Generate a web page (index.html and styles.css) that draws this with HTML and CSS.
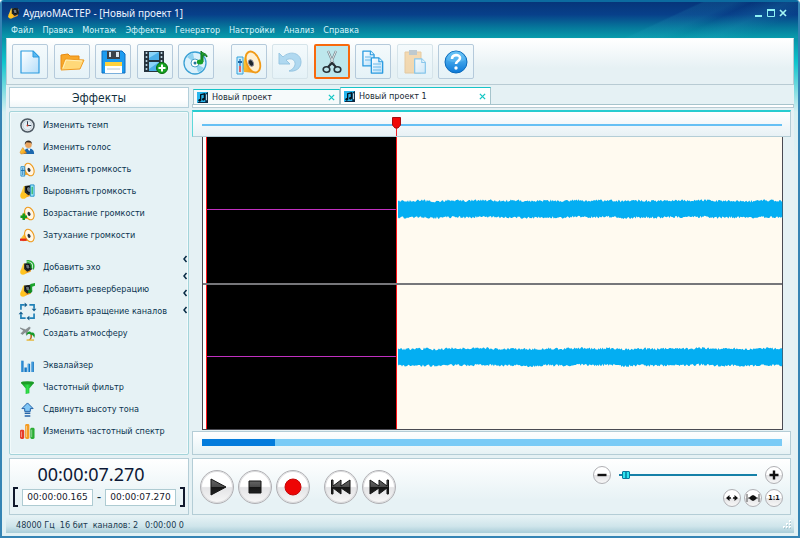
FILE: index.html
```html
<!DOCTYPE html>
<html lang="ru">
<head>
<meta charset="utf-8">
<title>АудиоМАСТЕР - [Новый проект 1]</title>
<link rel="stylesheet" href="styles.css">
</head>
<body>
<svg class="defs" aria-hidden="true">
  <defs>
    <linearGradient id="gold" x1="0" y1="0" x2="1" y2="1"><stop offset="0" stop-color="#ffe34a"/><stop offset="1" stop-color="#f08a10"/></linearGradient>
    <linearGradient id="sheet" x1="0" y1="0" x2="1" y2="1"><stop offset="0" stop-color="#ffffff"/><stop offset="1" stop-color="#b4defa"/></linearGradient>
    <linearGradient id="blue" x1="0" y1="0" x2="0" y2="1"><stop offset="0" stop-color="#6cc8f8"/><stop offset="1" stop-color="#0a78d8"/></linearGradient>
    <linearGradient id="green" x1="0" y1="0" x2="1" y2="0"><stop offset="0" stop-color="#0c8a18"/><stop offset=".5" stop-color="#2fe04a"/><stop offset="1" stop-color="#0a7a14"/></linearGradient>
    <linearGradient id="dark" x1="0" y1="0" x2="0" y2="1"><stop offset="0" stop-color="#666"/><stop offset=".5" stop-color="#4a4a4a"/><stop offset=".5" stop-color="#151515"/><stop offset="1" stop-color="#222"/></linearGradient>
  </defs>
  <symbol id="cone" viewBox="0 0 16 16">
    <path d="M1 11 7 3l5 10-9 1z" fill="url(#gold)"/>
    <ellipse cx="10" cy="8" rx="4.600" ry="7" transform="rotate(-24 10 8)" fill="#fff6e6" stroke="#ee9a1c" stroke-width="1.200"/>
    <ellipse cx="9.400" cy="8.600" rx="1.500" ry="2.300" transform="rotate(-24 9 8)" fill="#27303a"/>
  </symbol>
  <symbol id="horn" viewBox="0 0 16 16">
    <path d="M1 10 4 2l10 1-1 9-8 3-4-1z" fill="url(#gold)"/>
    <path d="m5 2 8-1 2 8-6 3-4-3z" fill="#20272b"/>
    <ellipse cx="9.500" cy="6" rx="2.400" ry="3.200" transform="rotate(-25 9 6)" fill="#6b757c" stroke="#000"/>
    <circle cx="3.600" cy="12.400" r="3.300" fill="#ffc420"/>
  </symbol>
  <symbol id="note" viewBox="0 0 12 12">
    <path d="M0 0h12v12H0z" fill="#27b6ee"/><path d="M9 2v9H1v1h11V0z" fill="#0a2a44"/><path d="M10 3v6h1V2z" fill="#e6f4fa"/>
    <path d="M4 9V3l4-1v6" fill="none" stroke="#04121e" stroke-width="1.400"/><circle cx="3" cy="9" r="1.500" fill="#04121e"/><circle cx="7" cy="8" r="1.500" fill="#04121e"/>
  </symbol>
  <symbol id="doc" viewBox="0 0 14 18">
    <path d="M1 1h8l4 4v12H1z" fill="url(#sheet)" stroke="#2a9be0" stroke-width="1.400" stroke-linejoin="round"/><path d="M9 1v4h4" fill="#e8f6ff" stroke="#2a9be0" stroke-width="1.200"/>
  </symbol>
</svg>

<div class="window">
  <header class="head">
    <div class="titlebar">
      <svg class="app-icon" viewBox="0 0 16 16"><use href="#horn"/></svg>
      <h1>АудиоМАСТЕР - [Новый проект 1]</h1>
      <div class="window-buttons">
        <button aria-label="Свернуть"><svg viewBox="0 0 10 10"><path d="M1 8h7" stroke="#8ff2f4" stroke-width="2"/></svg></button>
        <button aria-label="Развернуть"><svg viewBox="0 0 10 10"><path d="M1.500 2v6.500h7V2z" fill="none" stroke="#8ff2f4"/><path d="M1 2h8" stroke="#8ff2f4" stroke-width="2"/></svg></button>
        <button aria-label="Закрыть"><svg viewBox="0 0 10 10"><path d="m2 2 6 6m0-6L2 8" stroke="#a4f6f4" stroke-width="1.700"/></svg></button>
      </div>
    </div>
    <nav class="menu">
      <a href="#">Файл</a><a href="#">Правка</a><a href="#">Монтаж</a><a href="#">Эффекты</a><a href="#">Генератор</a><a href="#">Настройки</a><a href="#">Анализ</a><a href="#">Справка</a>
    </nav>
  </header>

  <main class="client">
    <div class="toolbar">
      <div class="tools tools-file">
        <button aria-label="Новый"><svg viewBox="0 0 26 26"><path d="M4 2h12l6 6v16H4z" fill="url(#sheet)" stroke="#2a9be0" stroke-width="1.200" stroke-linejoin="round"/><path d="M16 2v6h6z" fill="#5ab8f0" stroke="#2a9be0"/></svg></button>
        <button aria-label="Открыть"><svg viewBox="0 0 26 26"><path d="M2 20V6l7-1 2 2h9v5" fill="#f8a82a" stroke="#e88a10"/><path d="M2 21 6 10l19 1-4 9z" fill="#ffd878" stroke="#f09a20"/><path d="m4 19 3-8 16 1" fill="none" stroke="#fff0b8"/></svg></button>
        <button aria-label="Сохранить"><svg viewBox="0 0 26 26"><path d="M2 2h20l3 3v19H2z" fill="#1c9cf0" stroke="#0c6cc0"/><path d="M7 2h13v8H7z" fill="#3b4148"/><path d="M9 3h2v5H9zm7 0h3v5h-3z" fill="#dfe6ec"/><path d="M5 13h17v11H5z" fill="#fff"/><path d="M5 13h17v4H5z" fill="#ffd23c"/><path d="M7 20h13" stroke="#b8c8d4"/></svg></button>
        <button aria-label="Из видео"><svg viewBox="0 0 26 26"><path d="M2 2h20v21H2z" fill="#26343e"/><path d="M7 3h10v8H7zm0 10h10v9H7z" fill="#4cb0e8"/><path d="M7 3h10L7 9zm0 10h10L7 20z" fill="#8ad4f8"/><path d="M4.500 3v20M19.500 3v20" stroke="#b9d2de" stroke-width="1.600" stroke-dasharray="2 2"/><circle cx="20" cy="19" r="5.500" fill="#16a422" stroke="#086a10"/><path d="M20 15.500v7M16.500 19h7" stroke="#fff" stroke-width="2"/></svg></button>
        <button aria-label="Из CD"><svg viewBox="0 0 26 26"><circle cx="12" cy="14" r="11" fill="#dcf1fb" stroke="#3aa0d4" stroke-width="1.300"/><path d="m12 14-8-6a10 10 0 0 1 6-4zm0 0 9 5a10 10 0 0 1-6 4z" fill="#8ed2f0"/><circle cx="12" cy="14" r="4" fill="#fff" stroke="#4c9fc4"/><circle cx="12" cy="14" r="1.500" fill="#24759c"/><path d="M18 12V2c2 3 6 2 6 6-2-2-4-2-4-2v7" fill="#20a030" stroke="#087018"/><ellipse cx="17" cy="13" rx="3.200" ry="2.500" fill="#18a028"/></svg></button>
      </div>
      <div class="tools tools-edit">
        <button aria-label="Громкость"><svg viewBox="0 0 26 26"><path d="m6 16 4-12 10 20-12-1z" fill="url(#gold)"/><ellipse cx="17" cy="13" rx="6.500" ry="11" transform="rotate(-22 17 13)" fill="#fff0d2" stroke="#f09a18" stroke-width="1.800"/><ellipse cx="15" cy="14" rx="2.300" ry="3.400" transform="rotate(-22 15 14)" fill="#1d252c" stroke="#889"/><path d="M1 8h6v17H1z" fill="#c8ecfc" stroke="#35a3dd"/><path d="M4 10v7" stroke="#2e8ad0" stroke-width="1.500"/><path d="M4 17v6" stroke="#ee3a30" stroke-width="1.500"/><path d="M2 13h4" stroke="#1c66a4" stroke-width="2"/></svg></button>
        <button class="faded" aria-label="Отменить"><svg viewBox="0 0 26 26"><path d="M2 4v11h11l-4-4c5-3 10 0 9 5-1 3-3 5-6 6 7 1 12-3 12-9 0-9-11-12-18-5z" fill="#74bce8" stroke="#4698cc"/></svg></button>
        <button class="selected" aria-label="Вырезать"><svg viewBox="0 0 26 26"><path d="m9 2 6 14m2-14-6 14" stroke="#76868e" stroke-width="2.200"/><path d="m9 2 6 14m2-14-6 14" stroke="#e0e8ea" stroke-width="1"/><path d="m9 18 4-4 4 4" fill="none" stroke="#222c32" stroke-width="2"/><ellipse cx="7.500" cy="20.500" rx="3.300" ry="2.700" fill="none" stroke="#263238" stroke-width="1.600"/><ellipse cx="18.500" cy="20.500" rx="3.300" ry="2.700" fill="none" stroke="#263238" stroke-width="1.600"/></svg></button>
        <button aria-label="Копировать"><svg viewBox="0 0 26 26"><use href="#doc" x="2" y="1" width="13" height="17"/><path d="M5 8h6M5 11h6" stroke="#68b8e8"/><use href="#doc" x="10" y="8" width="14" height="17"/><path d="M13 15h8m-8 3h8m-8 3h8" stroke="#68b8e8"/></svg></button>
        <button class="faded" aria-label="Вставить"><svg viewBox="0 0 26 26"><path d="M3 3h16v21H3z" fill="#f8bd6c" stroke="#dfa04c"/><path d="M7 1h8v5H7z" fill="#8c9ba4"/><use href="#doc" x="11" y="9" width="14" height="16"/></svg></button>
        <button aria-label="Помощь"><svg viewBox="0 0 26 26"><circle cx="13" cy="13" r="11" fill="url(#blue)" stroke="#0869bb"/><path d="M4 11a9 9 0 0 1 18 0c-5 3-13 3-18 0" fill="#64bef4" opacity=".5"/><path d="M9 10c0-5 8-5 8-1 0 3-4 3-4 6" fill="none" stroke="#fff" stroke-width="2.600"/><circle cx="13" cy="19" r="1.700" fill="#fff"/></svg></button>
      </div>
    </div>

    <div class="workspace">
      <aside class="side">
        <h2>Эффекты</h2>
        <div class="effects">
          <ul>
            <li><a href="#"><svg viewBox="0 0 16 16"><circle cx="8" cy="8" r="7" fill="#f4f8fa" stroke="#4c5862" stroke-width="1.600"/><circle cx="8" cy="8" r="5" fill="#e4eef4" stroke="#98a8b4" stroke-width=".6"/><path d="M8 3.500V8h4" fill="none" stroke="#223344"/><circle cx="8" cy="8" r="1" fill="#e23b22"/></svg>Изменить темп</a></li>
            <li><a href="#"><svg viewBox="0 0 16 16"><path d="M4 15c0-6 4-6 5-6s6 0 6 5v1z" fill="#1c68ae"/><path d="m8 9 2 3 1-3" fill="#fff"/><circle cx="9" cy="5" r="3.500" fill="#e9a45e"/><path d="M5 5c0-6 8-6 8 0l-1-2-5-.500z" fill="#38291e"/><path d="m0 13 3-5 4 6-6 1z" fill="url(#gold)" stroke="#d07812" stroke-width=".5"/></svg>Изменить голос</a></li>
            <li><a href="#"><svg viewBox="0 0 16 16"><use href="#cone"/><path d="M1 5h4v10H1z" fill="#c4edff" stroke="#2790cb"/><path d="M3 6v8M1 9h4" stroke="#116eb0"/></svg>Изменить громкость</a></li>
            <li><a href="#"><svg viewBox="0 0 16 16"><use href="#horn"/><path d="M11 1h4v12h-4z" fill="#a7edff" stroke="#1e8fc8"/><path d="M13 3v8" stroke="#35b86b" stroke-width="1.500"/></svg>Выровнять громкость</a></li>
            <li><a href="#"><svg viewBox="0 0 16 16"><use href="#cone"/><path d="M4 8v7M.500 11.500h7" stroke="#159a1e" stroke-width="2.600"/></svg>Возрастание громкости</a></li>
            <li><a href="#"><svg viewBox="0 0 16 16"><use href="#cone"/><path d="M0 12.500h7" stroke="#e4261c" stroke-width="2.400"/></svg>Затухание громкости</a></li>
          </ul>
          <ul>
            <li><a href="#"><svg viewBox="0 0 16 16"><use href="#horn" y="2" width="14" height="14"/><path d="M7 3c4-1 6 2 5 6M7 1c7-1 9 4 7 9" fill="none" stroke="#22ac30" stroke-width="1.500"/></svg>Добавить эхо</a></li>
            <li><a href="#"><svg viewBox="0 0 16 16"><use href="#horn" y="2" width="14" height="14"/><path d="M11 10V2l5-1v3l-3 1v5z" fill="#1aa62c"/><circle cx="10.500" cy="10" r="2" fill="#118a20"/></svg>Добавить реверберацию</a></li>
            <li><a href="#"><svg viewBox="0 0 16 16"><path d="M1 6V1h4M10 1h5v4M15 10v5h-5M6 15H1v-4" fill="none" stroke="#2182b8" stroke-width="1.800"/><path d="m5-1.500 3 2.500-3 2.500zM12.500 5h5L15 8zM10 12.500v5L7 15zM-1.500 11h5L1 8z" fill="#17608e"/></svg>Добавить вращение каналов</a></li>
            <li><a href="#"><svg viewBox="0 0 16 16"><path d="m0 2 6 2 4-3 1 1-3 4-1 4-1-4-3 3-2-1 3-3z" fill="#8b9193" stroke="#636b6d" stroke-width=".5"/><path d="M9 15c3-2 2-5 2-7h1.500c1 3 0 6-1.500 7z" fill="#b86b20"/><path d="M7 10c0-5 4-5 5-3 3-1 5 2 3 6 0-3-3-4-4-4-2-1-3 0-4 1" fill="#159a2b"/><path d="M7 15h8" stroke="#e5b83b" stroke-width="1.500"/></svg>Создать атмосферу</a></li>
          </ul>
          <ul>
            <li><a href="#"><svg viewBox="0 0 16 16"><path d="M2.500 3v12M6 10v5M9.500 6v9M13.500 4v11" stroke="#1778c4" stroke-width="2.600"/><path d="M2 3v12M9 6v9M13 4v11" stroke="#68baf0" stroke-width=".8"/></svg>Эквалайзер</a></li>
            <li><a href="#"><svg viewBox="0 0 16 16"><path d="M1 3h14l-5 6v5l-4 1V9z" fill="url(#green)"/><ellipse cx="8" cy="3" rx="7" ry="1.800" fill="#1b9c26"/></svg>Частотный фильтр</a></li>
            <li><a href="#"><svg viewBox="0 0 16 16"><path d="m8 1 6 6h-3v3H5V7H2z" fill="#80c6f5" stroke="#1b5ba2"/><path d="M5 12h6m-6 3h6" stroke="#2866a8" stroke-width="1.700"/></svg>Сдвинуть высоту тона</a></li>
            <li><a href="#"><svg viewBox="0 0 16 16"><rect x="0" y="6" width="4.500" height="10" rx="1.500" fill="#e53b28"/><rect x="5.500" y="0" width="4.500" height="16" rx="1.500" fill="#f49b20"/><rect x="11" y="4" width="4.500" height="12" rx="1.500" fill="#29ad32"/><path d="M1.500 8v6M7 2v12m5.500-8v8" stroke="#fff" opacity=".5"/></svg>Изменить частотный спектр</a></li>
          </ul>
          <div class="splitter" aria-hidden="true">
            <svg viewBox="0 0 4 6"><path d="M3.500 0 1 3l2.500 3"/></svg><svg viewBox="0 0 4 6"><path d="M3.500 0 1 3l2.500 3"/></svg><svg viewBox="0 0 4 6"><path d="M3.500 0 1 3l2.500 3"/></svg><svg viewBox="0 0 4 6"><path d="M3.500 0 1 3l2.500 3"/></svg>
          </div>
        </div>
      </aside>

      <section class="editor">
        <div class="tabs">
          <div class="tab"><svg viewBox="0 0 12 12"><use href="#note"/></svg><span>Новый проект</span><button aria-label="Закрыть вкладку"><svg viewBox="0 0 8 8"><path d="m1 1 6 6m0-6L1 7"/></svg></button></div>
          <div class="tab active"><svg viewBox="0 0 12 12"><use href="#note"/></svg><span>Новый проект 1</span><button aria-label="Закрыть вкладку"><svg viewBox="0 0 8 8"><path d="m1 1 6 6m0-6L1 7"/></svg></button></div>
        </div>
        <div class="tab-base"></div>
        <div class="ruler">
          <div class="ruler-line"></div>
          <div class="playhead"><svg viewBox="0 0 9 19"><path d="M4.500 10v9" stroke="#f02028"/><path d="M.500.500h8V8L6 11H3L.500 8z" fill="#f00808" stroke="#a80c10"/></svg></div>
        </div>
        <div class="tracks">
          <div class="track"><div class="lead"></div><div class="selection"></div><svg class="wave" viewBox="0 0 386 20" preserveAspectRatio="none"><path/></svg></div>
          <div class="track"><div class="lead"></div><div class="selection"></div><svg class="wave" viewBox="0 0 386 20" preserveAspectRatio="none"><path/></svg></div>
        </div>
        <div class="scroller"><div class="scroll-track"><div class="scroll-thumb"></div></div></div>
      </section>
    </div>

    <div class="bottom">
      <section class="time">
        <output>00:00:07.270</output>
        <div class="range">
          <i class="bracket open"></i><input aria-label="Начало" value="00:00:00.165"><b>–</b><input aria-label="Конец" value="00:00:07.270"><i class="bracket close"></i>
        </div>
      </section>
      <section class="controls">
        <div class="transport">
          <button class="round" aria-label="Играть"><svg viewBox="0 0 20 20"><path d="M4 2 19 10 4 18z"/></svg></button>
          <button class="round" aria-label="Стоп"><svg viewBox="0 0 20 20"><path d="M4 4h12v12H4z"/></svg></button>
          <button class="round" aria-label="Запись"><svg viewBox="0 0 20 20"><circle class="record" cx="10" cy="10" r="8"/></svg></button>
          <button class="round apart" aria-label="В начало"><svg viewBox="0 0 20 20"><path d="M.500 3H2v6l8-6v6l9-6v14l-9-6v6l-8-6v6H.500z"/></svg></button>
          <button class="round" aria-label="В конец"><svg viewBox="0 0 20 20"><path d="M19.500 3H18v6l-8-6v6L1 3v14l9-6v6l8-6v6h1.500z"/></svg></button>
        </div>
        <div class="zoom">
          <div class="zoom-row">
            <button class="small" aria-label="Уменьшить"><svg viewBox="0 0 12 12"><path d="M1.500 6h9" stroke-width="2.400"/></svg></button>
            <input type="range" aria-label="Масштаб" min="0" max="100" value="2">
            <button class="small" aria-label="Увеличить"><svg viewBox="0 0 12 12"><path d="M1.500 6h9M6 1.500v9" stroke-width="2.400"/></svg></button>
          </div>
          <div class="zoom-fit">
            <button class="small" aria-label="Весь трек"><svg viewBox="0 0 12 12"><path d="M1 6h4m2 0h4" stroke-width="1.500"/><path d="M3.500 3v6L0 6zm5 0v6L12 6z" stroke="none" fill="#111"/></svg></button>
            <button class="small" aria-label="Выделение"><svg viewBox="0 0 12 12"><path d="M0 2v8M12 2v8M1 6h10" stroke="#555"/><path d="m2 6 2-2 2-1 2 1 2 2-2 2-2 1-2-1z" stroke="none" fill="#111"/></svg></button>
            <button class="small">1:1</button>
          </div>
        </div>
      </section>
    </div>
    <footer class="status"><span>48000 Гц</span><span>16 бит</span><span>каналов: 2</span><span class="last">0:00:00 0</span>
      <svg class="grip" viewBox="0 0 10 10"><path d="M7 1h2M4 4h2m1 0h2M1 7h2m1 0h2m1 0h2" stroke="#fff" stroke-width="2"/><path d="M8 2h1M5 5h1m2 0h1M2 8h1m2 0h1m2 0h1" stroke="#7ea8b4"/></svg>
    </footer>
  </main>
</div>
<script src="wave.js"></script>
</body>
</html>
```
FILE: styles.css
```css
* { box-sizing: border-box; }
body { margin: 0; font-family: "DejaVu Sans Condensed", "DejaVu Sans", "Noto Sans", sans-serif; font-size: 9px; color: #102f40; }
button { padding: 0; font: inherit; }
a { color: inherit; text-decoration: none; }
svg { display: block; overflow: visible; }
h1, h2, ul { margin: 0; padding: 0; font-weight: 400; }
ul { list-style: none; }
.defs { position: absolute; width: 0; height: 0; }

.window {
  display: flex; flex-direction: column; min-height: 100vh; padding: 0 4px 3px;
  border: 2px solid #3584b4; border-top-color: #0c6ba0; border-radius: 4px 4px 0 0;
  background: linear-gradient(#06357a 0, #0a4686 14px, #0793a8 36px, #10c4cc 60px, #d4f0f2 110px, #e2f1f4 160px);
}
.head {
  height: 36px; margin: 0 -4px; padding: 0 8px 0 6px; color: #fff;
  background:
    linear-gradient(155deg, transparent 80%, #2ba8c522 80.500%, #2ba8c522 84%, transparent 86%, #2ba8c52a 90%, transparent 94%),
    linear-gradient(#06357a, #08408a 35%, #067a9c 72%, #089cac);
}
.titlebar { display: flex; align-items: center; gap: 3px; height: 21px; }
.titlebar h1 { flex: 1; font-family: "Noto Sans", sans-serif; font-size: 10px; line-height: 20px; color: #eaf4ff; }
.app-icon { width: 12px; height: 12px; }
.window-buttons { display: flex; }
.window-buttons button { width: 12px; height: 12px; border: 0; background: none; }
.window-buttons svg { width: 10px; height: 10px; }
.menu { display: flex; gap: 9px; padding-left: 3px; line-height: 14px; color: #d4f4fa; }

.client { display: flex; flex: 1; flex-direction: column; background: #e5f1f4; }
.toolbar {
  display: flex; gap: 17px; height: 47px; padding: 6px 5px; border: 1px solid #b8cbd3; border-top-color: #f7fbfc;
  background: linear-gradient(#fff, #e6f1f4 65%);
}
.tools { display: flex; justify-content: space-between; }
.tools-file { width: 202px; }
.tools-edit { width: 243px; }
.tools button {
  display: grid; place-items: center; width: 36px; height: 35px; margin-top: -1px;
  border: 1px solid #b5cadb; border-radius: 2px; background: linear-gradient(#f4fafc, #e5f2f7);
}
.tools svg { width: 26px; height: 26px; }
.tools .faded { border-color: #d6e4ea; }
.tools .faded svg { opacity: .5; }
.tools .selected { border: 2px solid #f8690c; background: #bde7ec; }

.workspace { display: flex; flex: 1; gap: 3px; padding: 2px 3px 0; }
.side { display: flex; flex-direction: column; gap: 3px; flex: 0 0 180px; }
.side h2 {
  height: 21px; border: 1px solid #b3cfda; background: linear-gradient(#fff 60%, #f0f7f9);
  font-size: 12px; line-height: 20px; text-align: center;
}
.effects {
  position: relative; display: flex; flex: 1; flex-direction: column; gap: 10px; padding: 2px 0 0 10px;
  border: 1px solid #a4d4da; border-radius: 2px; background: #e6f2f5; box-shadow: inset 0 0 0 1px #f2fafb;
}
.effects a { display: flex; align-items: center; gap: 8px; height: 22px; color: #0a3450; white-space: nowrap; }
.effects a svg { width: 15px; height: 15px; }
.splitter { position: absolute; top: 144px; right: 1px; display: grid; gap: 11px; }
.splitter svg { width: 4px; height: 6px; fill: none; stroke: #062a44; stroke-width: 1.500; }

.editor { display: flex; flex: 1; flex-direction: column; min-width: 0; margin-right: -3px; }
.tabs { display: flex; align-items: flex-end; height: 17px; padding-left: 1px; }
.tab {
  display: flex; align-items: center; gap: 4px; flex: 0 0 147px; height: 15px; padding: 0 4px 0 3px;
  border: 1px solid #a6c4cc; border-top: 1px solid #17c4c8; border-bottom: 0; background: #f6fafb; color: #182a34;
}
.tab.active { flex-basis: 151px; height: 17px; background: #fff; }
.tab span { flex: 1; }
.tab > svg { width: 11px; height: 11px; }
.tab button { border: 0; background: none; }
.tab button svg { width: 7px; height: 7px; fill: none; stroke: #14c6c4; stroke-width: 1.500; }
.tab-base { height: 4px; border: 1px solid #b8cbd3; border-top-color: #a6c4cc; background: #fff; }
.ruler {
  position: relative; height: 27px; margin: 2px 3px 0 0; padding: 12px 8px 0 9px;
  border: 1px solid #b4cdd6; border-top: 2px solid #28ccd0; border-left-color: #5ed8da;
  background: linear-gradient(#fff, #e8f1f5);
}
.ruler-line { height: 2px; background: #66c0f4; }
.playhead { position: absolute; top: 5px; left: 34.100%; width: 9px; margin-left: -5px; }
.playhead svg { width: 9px; height: 19px; }
.tracks { display: grid; flex: 1; grid-template-rows: 1fr 1fr; margin: -2px 11px 0 10px; border: 1px solid #4a4a52; }
.track { display: flex; align-items: stretch; background: #fffaf0; }
.track + .track { border-top: 2px solid #76767a; }
.lead { width: 4px; border-right: 1px solid #ff1016; background: #fff; }
.selection { flex: 189; border-right: 1px solid #ff1016; background: linear-gradient(#c030c0, #c030c0) center / 100% 1px no-repeat #000; }
.wave { flex: 386; align-self: center; width: 0; height: 20px; fill: #04aef2; }
.scroller { margin: 1px 3px 0 0; padding: 7px 8px 8px 9px; border: 1px solid #b4cdd6; background: linear-gradient(#fff, #e6f2f5); }
.scroll-track { height: 7px; background: #7acbf6; }
.scroll-thumb { width: 12.500%; height: 7px; background: #047cdc; }

.bottom { display: flex; gap: 3px; height: 60px; padding: 3px 0 0 3px; }
.time, .controls { border: 1px solid #b4cdd6; background: linear-gradient(#fff, #e7f2f5 75%); }
.time { display: flex; flex: 0 0 180px; flex-direction: column; align-items: center; padding-top: 2px; }
.time output { padding-right: 16px; font: 18px/26px "Noto Sans", sans-serif; color: #0c1836; }
.range { display: flex; align-items: center; gap: 4px; }
.range input {
  width: 71px; height: 17px; padding: 0; border: 1px solid #aecbd2; background: #fff;
  font: 9px "DejaVu Sans", sans-serif; text-align: center; color: #16202c;
}
.bracket { width: 5px; height: 20px; border: 2px solid #10182c; }
.bracket.open { border-right: 0; }
.bracket.close { border-left: 0; }
.controls { display: flex; flex: 1; align-items: center; justify-content: space-between; margin-right: 3px; padding: 0 7px; }
.transport { display: flex; gap: 4px; }
.round, .small { display: grid; place-items: center; border: 1px solid #b0b0b4; border-radius: 50%; background: linear-gradient(#fff 48%, #e4e4e6 52%, #f7f7f7); color: #111; }
.round { width: 34px; height: 34px; box-shadow: inset 0 0 0 1px #dcdcde; }
.round.apart { margin-left: 10px; }
.round svg { width: 20px; height: 20px; fill: url(#dark); stroke: #151515; stroke-width: 1; }
.round .record { fill: #ee0505; stroke: #c40808; }
.zoom { display: grid; gap: 5px; }
.zoom-row { display: flex; align-items: center; gap: 8px; }
.zoom-fit { display: flex; justify-content: flex-end; gap: 3px; }
.small { width: 18px; height: 18px; font-size: 7px; font-weight: 700; line-height: 14px; }
.small svg { width: 12px; height: 12px; stroke: #111; fill: none; }
input[type="range"] { width: 138px; height: 12px; margin: 0; appearance: none; background: linear-gradient(#1580a8, #1580a8) center / 100% 2px no-repeat; }
input[type="range"]::-webkit-slider-thumb { appearance: none; width: 8px; height: 8px; border: 1px solid #08789c; border-radius: 1px; background: linear-gradient(90deg, #2ee4ee 40%, #0c92b4 40% 60%, #2ee4ee 60%); }

.status {
  display: flex; align-items: center; gap: 5px; height: 17px; margin-top: 1px; padding: 0 2px 0 10px;
  background: linear-gradient(#e6f2f5, #cfe5eb 60%, #a9cdd8); color: #1a3a50;
}
.status .last { margin-left: 2px; }
.grip { width: 10px; height: 10px; margin-left: auto; }
```
FILE: wave.js
```js
// Draws a band of steady noise with ragged upper and lower edges.
document.querySelectorAll('.wave path').forEach((path, track) => {
  let seed = 17 + track * 40;
  const next = () => (seed = (seed * 1103515245 + 12345) % 2147483648) / 2147483648;
  const top = [], bottom = [];
  for (let x = 1; x <= 386; x++) {
    const swell = Math.sin(x / 5) * 0.3 + Math.sin(x / 17) * 0.3;
    top.push(`${x},${(0.5 + swell + next() * 2.4).toFixed(1)}`);
    bottom.unshift(`${x},${(19.5 + swell - next() * 2.4).toFixed(1)}`);
  }
  path.setAttribute('d', `M${top.join('L')}L${bottom.join('L')}Z`);
});
```
